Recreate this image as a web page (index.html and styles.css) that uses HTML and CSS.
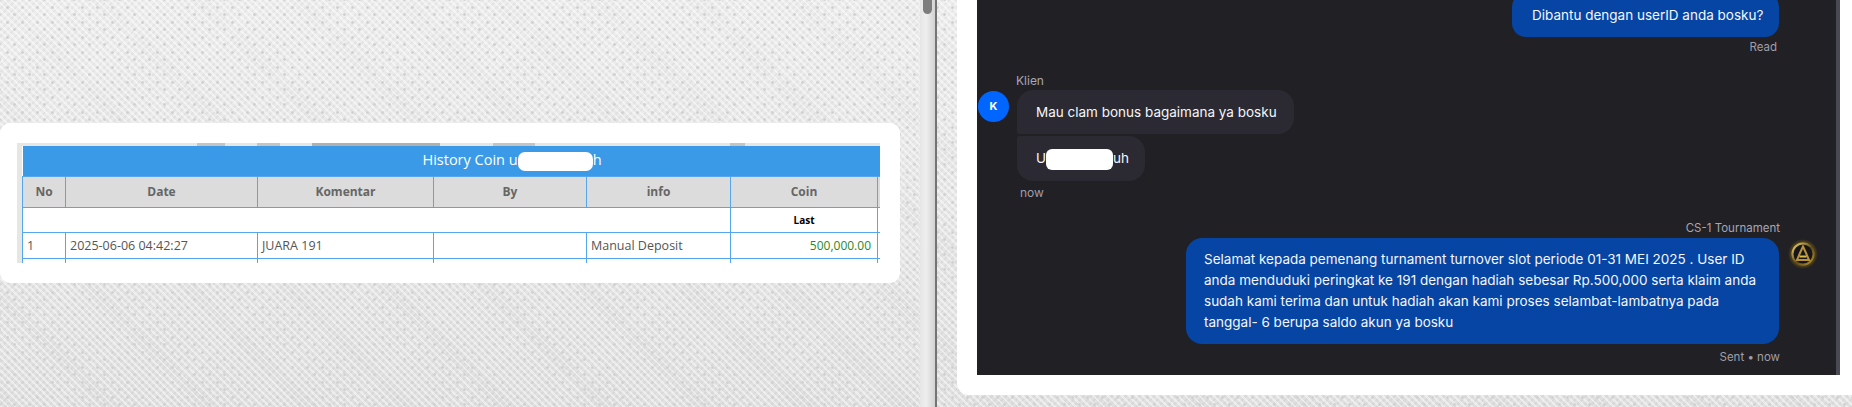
FILE: index.html
```html
<!DOCTYPE html>
<html lang="en">
<head>
    <meta charset="UTF-8">
    <title>History Coin</title>
    <link rel="stylesheet" href="styles.css">
</head>
<body>
    <div class="page">
        <!-- history coin -->
        <div class="left">
            <div class="history-card">
                <div class="table-wrap">
                    <table class="coin-table">
                        <colgroup>
                            <col class="col-no">
                            <col class="col-date">
                            <col class="col-komentar">
                            <col class="col-by">
                            <col class="col-info">
                            <col class="col-coin">
                            <col>
                        </colgroup>
                        <tr class="title-row">
                            <th colspan="7">History Coin u<span class="redact redact-title"></span>h</th>
                        </tr>
                        <tr class="head-row">
                            <th>No</th>
                            <th>Date</th>
                            <th>Komentar</th>
                            <th>By</th>
                            <th>info</th>
                            <th>Coin</th>
                            <th></th>
                        </tr>
                        <tr class="last-row">
                            <td colspan="5"></td>
                            <td class="last">Last</td>
                            <td></td>
                        </tr>
                        <tr class="data-row">
                            <td>1</td>
                            <td>2025-06-06 04:42:27</td>
                            <td>JUARA 191</td>
                            <td></td>
                            <td>Manual Deposit</td>
                            <td class="amount">500,000.00</td>
                            <td></td>
                        </tr>
                        <tr class="data-row">
                            <td></td>
                            <td></td>
                            <td></td>
                            <td></td>
                            <td></td>
                            <td></td>
                            <td></td>
                        </tr>
                    </table>
                </div>
            </div>
        </div>

        <div class="scrollbar"><div class="scroll-thumb"></div></div>
        <div class="divider"></div>

        <!-- chat -->
        <div class="right">
            <div class="chat-card">
                <div class="chat">
                    <div class="bubble bubble-out bubble-short">Dibantu dengan userID anda bosku?</div>
                    <div class="meta meta-out meta-read">Read</div>

                    <div class="name name-in">Klien</div>
                    <div class="row-in">
                        <div class="avatar-in">K</div>
                        <div class="bubble bubble-in bubble-first">Mau clam bonus bagaimana ya bosku</div>
                    </div>
                    <div class="bubble bubble-in bubble-second">U<span class="redact redact-chat"></span>uh</div>
                    <div class="meta meta-now">now</div>

                    <div class="name name-out">CS-1 Tournament</div>
                    <div class="row-out">
                        <div class="bubble bubble-out bubble-long">Selamat kepada pemenang turnament turnover slot periode 01-31 MEI 2025 . User ID anda menduduki peringkat ke 191 dengan hadiah sebesar Rp.500,000 serta klaim anda sudah kami terima dan untuk hadiah akan kami proses selambat-lambatnya pada tanggal- 6 berupa saldo akun ya bosku</div>
                        <svg class="avatar-out" viewBox="0 0 30 30">
                            <defs>
                                <radialGradient id="glow">
                                    <stop offset="0.6" stop-color="#7a6320"/>
                                    <stop offset="0.8" stop-color="#4f4116"/>
                                    <stop offset="1" stop-color="#202025"/>
                                </radialGradient>
                                <linearGradient id="gold" x1="0" y1="0" x2="1" y2="1">
                                    <stop offset="0" stop-color="#f0d772"/>
                                    <stop offset="0.55" stop-color="#5e4a18"/>
                                    <stop offset="1" stop-color="#b8963a"/>
                                </linearGradient>
                            </defs>
                            <circle cx="15" cy="15" r="15" fill="url(#glow)"/>
                            <circle cx="15" cy="15" r="10.5" fill="#16161a" stroke="url(#gold)" stroke-width="2"/>
                            <path d="M15 7.5 L18 14 L21 21 H9 L12 14 Z" fill="none" stroke="#b8923a" stroke-width="2"/>
                            <path d="M11.5 17.5 H18.5" stroke="#dcb850" stroke-width="2"/>
                        </svg>
                    </div>
                    <div class="meta meta-out">Sent &bull; now</div>
                </div>
            </div>
        </div>
    </div>
</body>
</html>
```

FILE: styles.css
```css
* {
    margin: 0;
    padding: 0;
    box-sizing: border-box;
}

html,
body {
    height: 100%;
    overflow: hidden;
}

body {
    font-family: "Inter", "Liberation Sans", sans-serif;
}

/* woven wallpaper: small dots over a diagonal weave */

.page {
    display: flex;
    height: 407px;
    background-color: #e6e6e6;
    background-image:
        radial-gradient(circle, #cfcfcf 0, #d4d4d4 1px, transparent 2px),
        radial-gradient(circle, #cfcfcf 0, #d4d4d4 1px, transparent 2px),
        repeating-linear-gradient(45deg, rgba(255, 255, 255, .45) 0 2px, transparent 2px 5px),
        repeating-linear-gradient(-45deg, rgba(0, 0, 0, .035) 0 2px, transparent 2px 5px),
        linear-gradient(#ededed, #e0e0e0);
    background-size: 15px 15px, 15px 15px, auto, auto, 100% 100%;
    background-position: 0 0, 7px 7px, 0 0, 0 0, 0 0;
}

.left {
    width: 920px;
    padding-top: 123px;
}

.history-card {
    width: 900px;
    height: 160px;
    padding: 20px 20px 20px 17px;
    background: #fff;
    border-radius: 10px;
}

/* the table is wider than the window around it and gets cut off */

.table-wrap {
    width: 863px;
    height: 120px;
    padding: 3px 0 0 5px;
    overflow: hidden;
    background-color: #e6e6e2;
    background-image: linear-gradient(90deg,
        transparent 180px, #c4c4c4 180px, #c4c4c4 208px,
        transparent 208px, transparent 240px, #c4c4c4 240px, #c4c4c4 263px,
        transparent 263px, transparent 295px, #b0b0b0 295px, #b0b0b0 423px,
        transparent 423px, transparent 476px, #c4c4c4 476px, #c4c4c4 518px,
        transparent 518px, transparent 713px, #c4c4c4 713px, #c4c4c4 728px,
        transparent 728px);
    background-size: 100% 3px;
    background-repeat: no-repeat;
}

.coin-table {
    width: 980px;
    table-layout: fixed;
    border-collapse: collapse;
    font-family: "Open Sans", "Liberation Sans", sans-serif;
    font-size: 12.5px;
    color: #555;
    background: #fff;
}

.col-no { width: 43px; }
.col-date { width: 192px; }
.col-komentar { width: 176px; }
.col-by { width: 153px; }
.col-info { width: 144px; }
.col-coin { width: 147px; }

.coin-table td,
.coin-table th {
    border: 1px solid #54a6ee;
    padding: 0 4px;
    white-space: nowrap;
}

.title-row th {
    height: 30px;
    border: 0;
    background: #3a9ae8;
    color: #fff;
    font-size: 14.5px;
    font-weight: 400;
}

.head-row th {
    height: 31px;
    background: #dcdcdc;
    color: #666;
    font-size: 12px;
}

.last-row td {
    height: 25px;
}

.data-row td {
    height: 26px;
}

.coin-table .last {
    text-align: center;
    font-size: 10px;
    font-weight: 700;
    color: #000;
}

.coin-table .amount {
    padding-right: 6px;
    text-align: right;
    font-size: 12px;
    color: #1f8a1f;
}

.redact {
    display: inline-block;
    background: #fff;
    vertical-align: middle;
}

.redact-title {
    width: 75px;
    height: 19px;
    border-radius: 7px;
}

.redact-chat {
    width: 67px;
    height: 21px;
    border-radius: 6px;
}

/* scrollbar between the two windows */

.scrollbar {
    width: 15px;
    padding: 0 3px;
    background: linear-gradient(90deg, #e6e6e6, #eeeeee 40%, #d2d2d2);
}

.scroll-thumb {
    height: 14px;
    background: #7d7d7d;
    border-radius: 0 0 5px 5px;
}

.divider {
    width: 2px;
    background: #747474;
}

.right {
    flex: 1;
    padding-left: 20px;
    padding-bottom: 12px;
}

.chat-card {
    height: 395px;
    padding: 0 12px 20px 20px;
    background: #fff;
    border-radius: 0 0 0 12px;
}

.chat {
    display: flex;
    flex-direction: column;
    justify-content: flex-end;
    height: 375px;
    padding: 0 18px 10px 1px;
    overflow: hidden;
    background: #202025;
    border-right: 4px solid #4a4a55;
}

.bubble {
    font-size: 13.5px;
    line-height: 21px;
    color: #f4f6fb;
    flex-shrink: 0;
}

.bubble-in {
    padding: 12px 0 11px 19px;
    background: #2b2a32;
    white-space: nowrap;
}

.bubble-out {
    background: #0645a3;
}

.bubble-first {
    width: 277px;
    border-radius: 16px 16px 16px 3px;
}

.bubble-second {
    width: 128px;
    margin: 2px 0 0 39px;
    border-radius: 3px 16px 16px 16px;
}

.bubble-short {
    align-self: flex-end;
    width: 267px;
    margin-right: 39px;
    padding: 12px 0 11px 20px;
    border-radius: 14px;
    white-space: nowrap;
}

.bubble-long {
    width: 593px;
    padding: 11px 18px;
    border-radius: 16px;
}

.name,
.meta {
    font-size: 12px;
    line-height: 16px;
    flex-shrink: 0;
}

.name {
    color: #a9a6b5;
}

.name-in {
    margin: 18px 0 1px 38px;
}

.name-out {
    align-self: flex-end;
    margin: 19px 38px 2px 0;
    font-size: 11.5px;
}

.meta {
    color: #a09ea8;
}

.meta-out {
    align-self: flex-end;
    margin: 5px 38px 0 0;
    font-size: 11.5px;
}

.meta-read {
    margin: 2px 41px 0 0;
}

.meta-now {
    margin: 4px 0 0 42px;
}

.row-in {
    display: flex;
    gap: 8px;
}

.avatar-in {
    width: 31px;
    height: 31px;
    margin-top: 1px;
    border-radius: 50%;
    background: #0066ff;
    color: #fff;
    font-size: 11px;
    font-weight: 700;
    line-height: 31px;
    text-align: center;
}

.row-out {
    display: flex;
    justify-content: flex-end;
    gap: 9px;
}

.avatar-out {
    width: 30px;
    height: 30px;
    flex-shrink: 0;
    margin-top: 1px;
}
```
